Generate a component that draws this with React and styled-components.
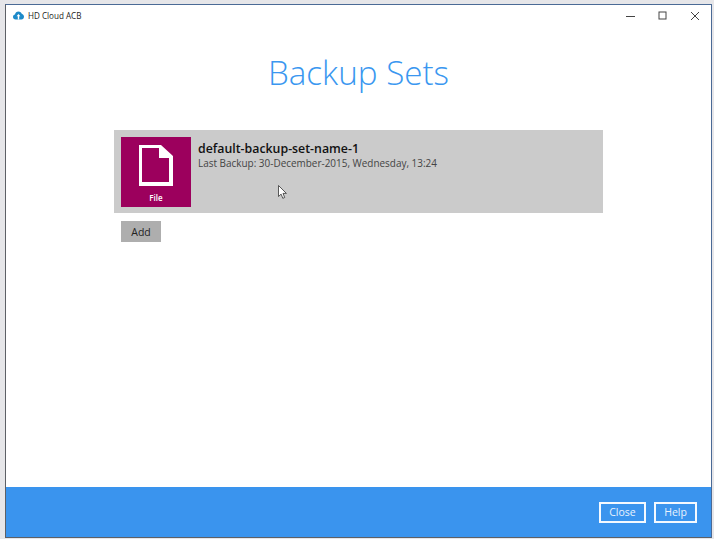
import React from "react";
import styled, { createGlobalStyle } from "styled-components";

const Global = createGlobalStyle`
  html, body { margin: 0; padding: 0; width: 716px; height: 541px; overflow: hidden; background: #fff; }
  body { font-family: "Open Sans", "Noto Sans", sans-serif; }
`;
const Page = styled.div`
  width: 716px; height: 541px; box-sizing: border-box; padding: 0 2px 2px 0; position: relative;
`;
const Frame = styled.div`
  width: 100%; height: 100%; box-sizing: border-box; padding: 4px 2px 1px 5px; background: #e6e6e9;
`;
const Win = styled.div`
  width: 100%; height: 100%; box-sizing: border-box; background: #fff;
  border: 1px solid #4a6a96; border-bottom-color: #5d6066; border-left-color: #5d6066;
  display: flex; flex-direction: column;
`;
const TitleBar = styled.div`
  height: 21px; display: flex; align-items: center; padding: 0 0 0 7px; flex: none;
`;
const AppName = styled.span`
  font-size: 8.1px; color: #222; margin-left: 4px; flex: 1;
`;
const WinBtn = styled.div`
  width: 32px; height: 21px; display: flex; align-items: center; justify-content: center;
  svg { display: block; }
`;
const Main = styled.div`
  flex: 1; display: flex; flex-direction: column; align-items: stretch;
`;
const Heading = styled.h1`
  margin: 20px 0 0; font-weight: 300; font-size: 33.2px; line-height: 54px; color: #3a97f0; text-align: center;
`;
const Sets = styled.div`
  margin: 30px 0 0 108px; width: 489px; display: flex; flex-direction: column;
`;
const SetRow = styled.div`
  background: #cbcbcb; height: 83px; box-sizing: border-box; padding: 7px; display: flex; gap: 7px;
`;
const Tile = styled.div`
  width: 70px; height: 70px; background: #9c005d; display: flex; flex-direction: column; align-items: center; flex: none;
`;
const TileIcon = styled.svg`
  margin-top: 8px; display: block;
`;
const TileLabel = styled.span`
  font-size: 8px; font-weight: 600; color: #fff; line-height: 11px; margin-top: 6px;
`;
const Info = styled.div`
  display: flex; flex-direction: column; padding-top: 3px;
`;
const SetName = styled.div`
  font-size: 12.35px; font-weight: 600; color: #111; line-height: 17px;
`;
const SetMeta = styled.div`
  font-size: 9.95px; color: #444; line-height: 13px;
`;
const AddBtn = styled.button`
  margin: 8px 0 0 7px; width: 40px; height: 21px; border: 0; padding: 0; background: #aeaeae; color: #222;
  font: 500 10.5px "Open Sans", sans-serif; align-self: flex-start;
`;
const Footer = styled.div`
  height: 50px; flex: none; background: #3a94ee; display: flex; align-items: center; justify-content: flex-end;
  gap: 8px; padding: 0 14px 0 0;
`;
const FootBtn = styled.button`
  width: ${p => p.$w}px; height: 21px; box-sizing: border-box; border: 2px solid #f4f9ff; outline: none; background: transparent;
  color: #e8f2fd; font: 500 10.5px "Open Sans", sans-serif; padding: 0;
`;
const Cursor = styled.svg`
  position: absolute; left: 278px; top: 185px;
`;

export default function App() {
  return (
    <Page>
      <Global />
      <Frame>
        <Win>
          <TitleBar>
            <svg width="11" height="9" viewBox="0 0 11 9">
              <path d="M2.6 8.4C1.1 8.4 0 7.4 0 6c0-1.2.8-2.2 2-2.4C2.3 1.8 3.7.5 5.5.5c1.6 0 2.9 1 3.4 2.5C10.1 3.2 11 4.4 11 5.7c0 1.5-1.1 2.7-2.6 2.7z" fill="#1d8ac9" />
              <path d="M5.5 3 3.6 5.2h1.2v3.2h1.4V5.2h1.2z" fill="#fff" />
            </svg>
            <AppName>HD Cloud ACB</AppName>
            <WinBtn><svg width="10" height="10"><path d="M0 5.5h9" stroke="#444" /></svg></WinBtn>
            <WinBtn><svg width="10" height="10"><rect x="1" y="1" width="7" height="7" fill="none" stroke="#444" /></svg></WinBtn>
            <WinBtn><svg width="10" height="10"><path d="M1 1l8 8M9 1l-8 8" stroke="#444" /></svg></WinBtn>
          </TitleBar>
          <Main>
            <Heading>Backup Sets</Heading>
            <Sets>
              <SetRow>
                <Tile>
                  <TileIcon width="34" height="41" viewBox="0 0 34 41">
                    <path fillRule="evenodd" fill="#fff" d="M0 0H22L34 11V41H0zM3 3V37H30V13H20V3z" />
                  </TileIcon>
                  <TileLabel>File</TileLabel>
                </Tile>
                <Info>
                  <SetName>default-backup-set-name-1</SetName>
                  <SetMeta>Last Backup: 30-December-2015, Wednesday, 13:24</SetMeta>
                </Info>
              </SetRow>
              <AddBtn>Add</AddBtn>
            </Sets>
          </Main>
          <Footer>
            <FootBtn $w={47}>Close</FootBtn>
            <FootBtn $w={43}>Help</FootBtn>
          </Footer>
        </Win>
      </Frame>
      <Cursor width="10" height="15" viewBox="0 0 10 15">
        <path d="M.5.5v11l2.6-2.4 1.7 4.2 1.9-.8-1.7-4.1h3.4z" fill="#fff" stroke="#333" strokeWidth=".8" />
      </Cursor>
    </Page>
  );
}
